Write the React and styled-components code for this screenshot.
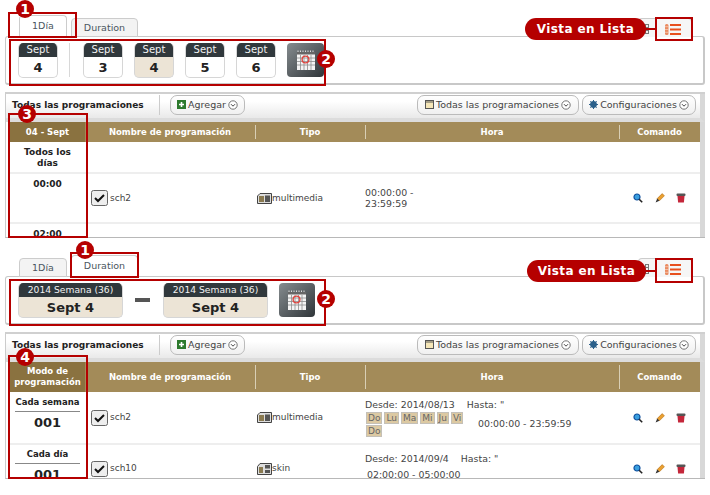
import styled, { createGlobalStyle } from "styled-components";

const GlobalStyle = createGlobalStyle`
  html, body {
    margin: 0;
    background: #fff;
    font-family: "DejaVu Sans", Verdana, sans-serif;
    color: #444;
  }
  * { box-sizing: border-box; }
`;

const CalendarIcon = () => (
  <svg width="20" height="21" viewBox="0 0 20 21">
    <rect x="1" y="2" width="18" height="18" fill="#f4f4f4" />
    <path d="M2 0.5v3M4.5 0.5v3M7 0.5v3M9.5 0.5v3M12 0.5v3M14.5 0.5v3M17 0.5v3" stroke="#ddd" />
    <rect x="1" y="2" width="18" height="2.5" fill="#666" />
    <path d="M4.5 5v15M8 5v15M11.5 5v15M15 5v15M1 8h18M1 11.5h18M1 15h18" stroke="#8d8d8d" strokeWidth="0.8" />
    <circle cx="9.5" cy="9.5" r="3.4" fill="none" stroke="#e0453f" strokeWidth="1.4" />
  </svg>
);

const ChevronCircle = () => (
  <svg width="10" height="10" viewBox="0 0 10 10">
    <circle cx="5" cy="5" r="4.2" fill="#fff" stroke="#555" strokeWidth="0.8" />
    <path d="M3 4.2l2 2 2-2" fill="none" stroke="#444" />
  </svg>
);

const PlusIcon = () => (
  <svg width="9" height="9" viewBox="0 0 9 9">
    <rect width="9" height="9" fill="#2d7a2d" />
    <path d="M4.5 2v5M2 4.5h5" stroke="#fff" strokeWidth="1.6" />
  </svg>
);

const NoteIcon = () => (
  <svg width="9" height="9" viewBox="0 0 9 9">
    <rect x="0.5" y="0.5" width="8" height="8" fill="#f5e6b8" stroke="#555" />
    <path d="M1 2h7" stroke="#555" />
  </svg>
);

const GearIcon = () => (
  <svg width="9" height="9" viewBox="0 0 9 9">
    <circle cx="4.5" cy="4.5" r="2.6" fill="none" stroke="#2a5f8a" strokeWidth="1.6" />
    <path d="M4.5 0v9M0 4.5h9M1.3 1.3l6.4 6.4M7.7 1.3L1.3 7.7" stroke="#2a5f8a" />
  </svg>
);

const ListIcon = () => (
  <svg width="16" height="11" viewBox="0 0 16 11">
    <path d="M5 1h11M5 5.5h11M5 10h11" stroke="#e8501e" strokeWidth="2" />
    <rect x="0" y="0" width="3.5" height="11" rx="1.5" fill="#ea8a60" />
    <path d="M0 2.7h3.5M0 5.5h3.5M0 8.3h3.5" stroke="#f6d4c2" strokeWidth="0.7" />
  </svg>
);

const GridIcon = () => (
  <svg width="4" height="10" viewBox="0 0 4 10">
    <rect x="0.5" y="0.5" width="3" height="9" fill="#eee" stroke="#777" />
    <path d="M0 3.5h4M0 6.5h4" stroke="#777" />
  </svg>
);

const CheckIcon = () => (
  <svg width="17" height="16" viewBox="0 0 17 16">
    <rect x="0.5" y="0.5" width="16" height="15" rx="2" fill="#eeeeee" stroke="#666" />
    <path d="M4 8l3 3 6-6" fill="none" stroke="#111" strokeWidth="2" />
  </svg>
);

const MediaIcon = () => (
  <svg width="15" height="11" viewBox="0 0 15 11">
    <path d="M0.5 3L3 0.5h11.5v10H0.5z" fill="#ddd" stroke="#444" />
    <rect x="2" y="3" width="5" height="6" fill="#8a7a50" />
    <rect x="8" y="2.5" width="5" height="6.5" fill="#555" />
  </svg>
);

const SkinIcon = () => (
  <svg width="15" height="12" viewBox="0 0 15 12">
    <path d="M0.5 3.5L3 0.5h11.5v11H0.5z" fill="#ddd" stroke="#444" />
    <rect x="2" y="4" width="4" height="6" fill="#8a7a50" />
    <rect x="8" y="2" width="5" height="3.5" fill="#555" />
    <rect x="8" y="7" width="5" height="3" fill="#555" />
  </svg>
);

const SearchIcon = () => (
  <svg width="10" height="10" viewBox="0 0 10 10">
    <circle cx="4" cy="4" r="3" fill="#3aa0e0" stroke="#0d4f9e" strokeWidth="1.2" />
    <path d="M6.2 6.2l3 3" stroke="#222" strokeWidth="1.6" />
  </svg>
);

const PencilIcon = () => (
  <svg width="10" height="10" viewBox="0 0 10 10">
    <path d="M2.2 5.6L7.2 0.6l2.2 2.2-5 5z" fill="#eaa030" stroke="#b06a10" strokeWidth="0.6" />
    <path d="M2.2 5.6L0.6 9.4l3.8-1.6z" fill="#333" />
  </svg>
);

const TrashIcon = () => (
  <svg width="10" height="10" viewBox="0 0 10 10">
    <rect x="0.5" y="0.5" width="9" height="2.4" rx="1" fill="#555" />
    <path d="M1.5 3h7l-0.6 6.5H2.1z" fill="#c4263a" />
  </svg>
);

const Section = styled.section`
  position: relative;
  padding: 0 5px;
  margin-top: ${(p) => p.$top}px;
`;

const TabRow = styled.div`
  display: flex;
  align-items: flex-end;
  height: 21px;
  padding: 0 13px 0 14px;
  gap: 4px;
  margin-bottom: -1px;
  position: relative;
  z-index: 1;
`;

const Tab = styled.div`
  display: flex;
  align-items: center;
  justify-content: center;
  width: ${(p) => p.$width}px;
  height: ${(p) => (p.$active ? 22 : 19)}px;
  padding-bottom: ${(p) => (p.$active ? 2 : 0)}px;
  font-size: 9.5px;
  color: #4a5560;
  background: ${(p) => (p.$active ? "#fff" : "#f3f3f3")};
  border: 1px solid #ccc;
  border-bottom: ${(p) => (p.$active ? "1px solid #fff" : "1px solid #ccc")};
  border-radius: 4px 4px 0 0;
`;

const ViewTabs = styled.div`
  display: flex;
  margin-left: auto;
  height: 19px;
  border: 1px solid #ccc;
  border-bottom: none;
  border-radius: 4px 4px 0 0;
  background: #f6f6f6;
`;

const ViewTab = styled.div`
  display: flex;
  align-items: center;
  justify-content: center;
  width: ${(p) => p.$width}px;
  padding-top: 2px;
`;

const DatePanel = styled.div`
  display: flex;
  align-items: center;
  height: 49px;
  padding-left: 12px;
  border: 1px solid #c8c8c8;
  border-width: 1px 2px 2px 1px;
  border-radius: 3px;
`;

const DateCard = styled.div`
  display: flex;
  flex-direction: column;
  width: ${(p) => p.$width}px;
  height: 35px;
  margin-right: ${(p) => p.$gap}px;
  border: 1px solid #d6d6d6;
  border-top: none;
  border-radius: 5px;
  background: ${(p) => (p.$active ? "#ece4d6" : "#fff")};
  overflow: hidden;
  text-align: center;
`;

const CardTop = styled.div`
  height: 14px;
  margin: 0 -1px;
  background: #30383c;
  color: #f2f2f2;
  font-size: ${(p) => p.$size}px;
  line-height: 14px;
`;

const CardBottom = styled.div`
  flex: 1;
  color: #222;
  font-weight: bold;
  font-size: 13px;
  line-height: 21px;
`;

const Divider = styled.div`
  width: 1px;
  height: 34px;
  margin: 0 13px 0 -1px;
  background: #d8d8d8;
`;

const Dash = styled.div`
  width: 15px;
  height: 4px;
  margin-right: 13px;
  background: #555;
`;

const CalendarButton = styled.div`
  display: flex;
  align-items: center;
  justify-content: center;
  width: ${(p) => p.$width}px;
  height: 34px;
  border-radius: 4px;
  background: linear-gradient(135deg, #868c8f, #2f3539);
`;

const ListPanel = styled.div`
  display: flex;
  flex-direction: column;
  height: ${(p) => p.$height}px;
  margin-top: 7px;
  border-top: 2px solid #d0d0d0;
  border-bottom: 1px solid #b8b8b8;
  border-left: 1px solid #ccc;
  overflow: hidden;
`;

const Toolbar = styled.div`
  display: flex;
  align-items: center;
  flex: none;
  height: 28px;
  padding: 0 4px 3px 6px;
  background: linear-gradient(#fff 30%, #e9e9e9);
  border-bottom: 4px solid #dcdcdc;
  border-right: 5px solid #d8d8d8;
`;

const ToolbarTitle = styled.div`
  font-size: 9px;
  font-weight: bold;
  color: #222;
  width: 148px;
  border-right: 1px solid #ccc;
  line-height: 20px;
`;

const ToolButton = styled.div`
  display: flex;
  align-items: center;
  justify-content: center;
  gap: 2px;
  flex: none;
  width: ${(p) => p.$width}px;
  height: 20px;
  margin-left: ${(p) => p.$left};
  font-size: 9.5px;
  color: #444;
  white-space: nowrap;
  background: linear-gradient(#fff, #f0f0f0);
  border: 1px solid #bbb;
  border-radius: 7px;
`;

const TableWrap = styled.div`
  flex: 1;
  overflow: hidden;
  padding-left: 4px;
  border-right: 5px solid #d8d8d8;
`;

const Table = styled.table`
  width: 690px;
  table-layout: fixed;
  border-collapse: collapse;
`;

const HeadCell = styled.th`
  position: relative;
  height: ${(p) => p.$height}px;
  padding: 0;
  font-size: 8.5px;
  line-height: 11px;
  font-weight: bold;
  white-space: nowrap;
  color: #fff;
  background: ${(p) => (p.$first ? "#8a7240" : "#a38b59")};
  & + &::before {
    content: "";
    position: absolute;
    left: 0;
    top: 3px;
    bottom: 3px;
    width: 1px;
    background: #d9cfb5;
  }
  &:nth-child(2)::before {
    display: none;
  }
`;

const Row = styled.tr`
  border-bottom: ${(p) => (p.$plain ? "none" : "2px solid #eeeeee")};
`;

const Cell = styled.td`
  height: ${(p) => p.$height}px;
  padding: 0;
  font-size: 9px;
  line-height: 11px;
  vertical-align: middle;
`;

const ModeCell = styled.td`
  padding: ${(p) => p.$pad ?? 5}px 5px 0;
  vertical-align: top;
  text-align: center;
  font-size: 9px;
  line-height: 11px;
  font-weight: bold;
  color: #222;
`;

const ModeLabel = styled.div`
  border-bottom: 1px solid #888;
  padding-bottom: 3px;
  font-size: 8.5px;
  white-space: nowrap;
`;

const ModeNumber = styled.div`
  font-size: 13px;
  line-height: 22px;
`;

const Name = styled.div`
  display: flex;
  align-items: center;
  gap: 2px;
  padding-left: 6px;
`;

const Type = styled.div`
  display: flex;
  align-items: center;
  padding-left: 2px;
`;

const TimeText = styled.div`
  padding-left: ${(p) => p.$left}px;
  margin-top: ${(p) => p.$top ?? 0}px;
  margin-bottom: ${(p) => p.$bottom ?? 0}px;
  font-size: 9.4px;
  white-space: nowrap;
`;

const Until = styled.span`
  margin-left: ${(p) => p.$left}px;
`;

const DayLine = styled.div`
  display: flex;
  align-items: center;
`;

const Chips = styled.div`
  display: flex;
  flex-wrap: wrap;
  gap: 1px 2px;
  width: 100px;
  margin-left: 1px;
  margin-top: 2px;
`;

const Chip = styled.span`
  padding: 0 1px;
  font-size: 9px;
  line-height: 10px;
  color: #666;
  background: #dcc9a2;
  border: 1px solid #c4c0b8;
`;

const Commands = styled.div`
  display: flex;
  gap: 11.5px;
  padding-left: 14px;
`;

const Mark = styled.div`
  position: absolute;
  left: ${(p) => p.$x}px;
  top: ${(p) => p.$y}px;
  width: ${(p) => p.$w}px;
  height: ${(p) => p.$h}px;
  border: 2px solid #b50000;
  z-index: 2;
  pointer-events: none;
`;

const Badge = styled.div`
  position: absolute;
  left: ${(p) => p.$x - 9}px;
  top: ${(p) => p.$y - 9}px;
  width: 18px;
  height: 18px;
  border-radius: 50%;
  background: #b50000;
  color: #fff;
  font: bold 14px/18px "DejaVu Sans", sans-serif;
  text-align: center;
  z-index: 3;
`;

const Pill = styled.div`
  position: absolute;
  left: ${(p) => p.$x}px;
  top: ${(p) => p.$y}px;
  width: ${(p) => p.$w}px;
  height: 22px;
  border-radius: 11px;
  background: #b50000;
  color: #fff;
  font-size: 12px;
  font-weight: bold;
  letter-spacing: 0.4px;
  line-height: 22px;
  text-align: center;
  z-index: 3;
  &::after {
    content: "";
    position: absolute;
    left: 100%;
    top: 10px;
    width: 10px;
    height: 2px;
    background: #b50000;
  }
`;

const Tabs = ({ active }) => (
  <TabRow>
    <Tab $width={48} $active={active === 0}>1Día</Tab>
    <Tab $width={67} $active={active === 1}>Duration</Tab>
    <ViewTabs>
      <ViewTab $width={16}><GridIcon /></ViewTab>
      <ViewTab $width={36}><ListIcon /></ViewTab>
    </ViewTabs>
  </TabRow>
);

const ToolbarRow = () => (
  <Toolbar>
    <ToolbarTitle>Todas las programaciones</ToolbarTitle>
    <ToolButton $width={75} $left="10px"><PlusIcon /> Agregar <ChevronCircle /></ToolButton>
    <ToolButton $width={162} $left="auto"><NoteIcon /> Todas las programaciones <ChevronCircle /></ToolButton>
    <ToolButton $width={114} $left="3px"><GearIcon /> Configuraciones <ChevronCircle /></ToolButton>
  </Toolbar>
);

const ColGroup = () => (
  <colgroup>
    <col width="75" />
    <col width="170" />
    <col width="110" />
    <col width="254" />
    <col width="81" />
  </colgroup>
);

const Head = ({ first, height }) => (
  <thead>
    <tr>
      <HeadCell $first $height={height}>{first}</HeadCell>
      <HeadCell $height={height}>Nombre de programación</HeadCell>
      <HeadCell $height={height}>Tipo</HeadCell>
      <HeadCell $height={height}>Hora</HeadCell>
      <HeadCell $height={height}>Comando</HeadCell>
    </tr>
  </thead>
);

const CommandIcons = () => (
  <Commands>
    <SearchIcon />
    <PencilIcon />
    <TrashIcon />
  </Commands>
);

const DayView = () => (
  <Section $top={16}>
    <Tabs active={0} />
    <DatePanel>
      <DateCard $width={40} $gap={12}>
        <CardTop $size={10}>Sept</CardTop>
        <CardBottom>4</CardBottom>
      </DateCard>
      <Divider />
      {[3, 4, 5, 6].map((day) => (
        <DateCard key={day} $width={40} $gap={11} $active={day === 4}>
          <CardTop $size={10}>Sept</CardTop>
          <CardBottom>{day}</CardBottom>
        </DateCard>
      ))}
      <CalendarButton $width={37}><CalendarIcon /></CalendarButton>
    </DatePanel>
    <ListPanel $height={146}>
      <ToolbarRow />
      <TableWrap>
        <Table>
          <ColGroup />
          <Head first="04 - Sept" height={20} />
          <tbody>
            <Row>
              <ModeCell>Todos los días</ModeCell>
              <Cell $height={31} />
              <Cell />
              <Cell />
              <Cell />
            </Row>
            <Row>
              <ModeCell>00:00</ModeCell>
              <Cell $height={50}><Name><CheckIcon /> sch2</Name></Cell>
              <Cell><Type><MediaIcon />multimedia</Type></Cell>
              <Cell><TimeText $left={0}>00:00:00 -<br />23:59:59</TimeText></Cell>
              <Cell><CommandIcons /></Cell>
            </Row>
            <Row $plain>
              <ModeCell>02:00</ModeCell>
              <Cell $height={48} />
              <Cell />
              <Cell />
              <Cell />
            </Row>
          </tbody>
        </Table>
      </TableWrap>
    </ListPanel>
    <Mark $x={8} $y={-4} $w={69} $h={26} />
    <Badge $x={25} $y={-7}>1</Badge>
    <Mark $x={9} $y={23} $w={317} $h={47} />
    <Badge $x={326} $y={43}>2</Badge>
    <Mark $x={8} $y={97} $w={80} $h={125} />
    <Badge $x={27} $y={98}>3</Badge>
    <Pill $x={525} $y={2} $w={121}>Vista en Lista</Pill>
    <Mark $x={655} $y={1} $w={38} $h={24} />
  </Section>
);

const DurationView = () => (
  <Section $top={18}>
    <Tabs active={1} />
    <DatePanel>
      <DateCard $width={105} $gap={12} $active>
        <CardTop $size={9.2}>2014 Semana (36)</CardTop>
        <CardBottom>Sept 4</CardBottom>
      </DateCard>
      <Dash />
      <DateCard $width={105} $gap={11} $active>
        <CardTop $size={9.2}>2014 Semana (36)</CardTop>
        <CardBottom>Sept 4</CardBottom>
      </DateCard>
      <CalendarButton $width={36}><CalendarIcon /></CalendarButton>
    </DatePanel>
    <ListPanel $height={147}>
      <ToolbarRow />
      <TableWrap>
        <Table>
          <ColGroup />
          <Head first={<>Modo de<br />programación</>} height={30} />
          <tbody>
            <Row>
              <ModeCell>
                <ModeLabel>Cada semana</ModeLabel>
                <ModeNumber>001</ModeNumber>
              </ModeCell>
              <Cell $height={52}><Name><CheckIcon /> sch2</Name></Cell>
              <Cell><Type><MediaIcon />multimedia</Type></Cell>
              <Cell>
                <TimeText $left={0}>Desde: 2014/08/13<Until $left={12}>Hasta: "</Until></TimeText>
                <DayLine>
                  <Chips>
                    {["Do", "Lu", "Ma", "Mi", "Ju", "Vi", "Do"].map((d, i) => (
                      <Chip key={i}>{d}</Chip>
                    ))}
                  </Chips>
                  <TimeText $left={12}>00:00:00 - 23:59:59</TimeText>
                </DayLine>
              </Cell>
              <Cell><CommandIcons /></Cell>
            </Row>
            <Row $plain>
              <ModeCell $pad={4}>
                <ModeLabel>Cada día</ModeLabel>
                <ModeNumber>001</ModeNumber>
              </ModeCell>
              <Cell $height={48}><Name><CheckIcon /> sch10</Name></Cell>
              <Cell><Type><SkinIcon />skin</Type></Cell>
              <Cell>
                <TimeText $left={0}>Desde: 2014/09/4<Until $left={12}>Hasta: "</Until></TimeText>
                <TimeText $left={2} $top={5} $bottom={5}>02:00:00 - 05:00:00</TimeText>
              </Cell>
              <Cell><CommandIcons /></Cell>
            </Row>
          </tbody>
        </Table>
      </TableWrap>
    </ListPanel>
    <Mark $x={70} $y={-4} $w={69} $h={26} />
    <Badge $x={85} $y={-6}>1</Badge>
    <Mark $x={9} $y={23} $w={317} $h={47} />
    <Badge $x={326} $y={43}>2</Badge>
    <Mark $x={8} $y={99} $w={80} $h={124} />
    <Badge $x={25} $y={101}>4</Badge>
    <Pill $x={527} $y={4} $w={119}>Vista en Lista</Pill>
    <Mark $x={655} $y={2} $w={38} $h={25} />
  </Section>
);

export default function App() {
  return (
    <>
      <GlobalStyle />
      <DayView />
      <DurationView />
    </>
  );
}
